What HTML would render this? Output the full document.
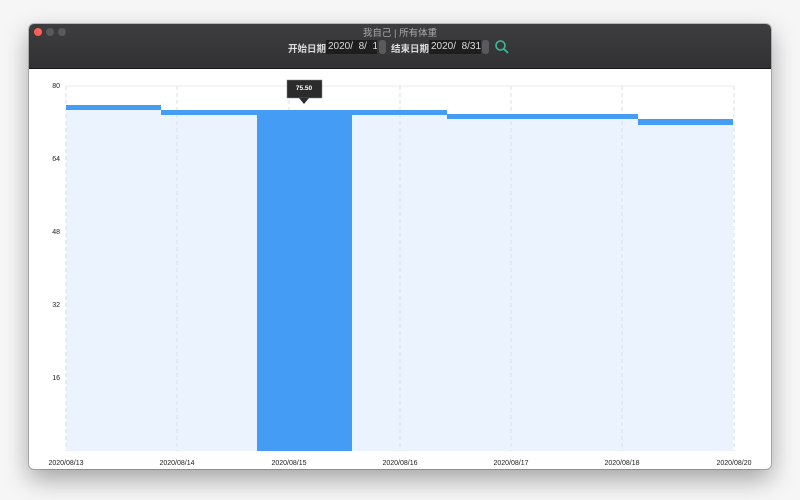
<!DOCTYPE html>
<html><head><meta charset="utf-8"><style>
body{margin:0;width:800px;height:500px;background:#f6f6f6;overflow:hidden;font-family:"Liberation Sans","Noto Sans CJK SC",sans-serif;position:relative}
.win{position:absolute;left:29px;top:24px;width:742px;height:445px;background:#fff;border-radius:5px;overflow:hidden;box-shadow:0 10px 25px rgba(0,0,0,.35),0 0 0 1px rgba(0,0,0,.2)}
.bar{position:absolute;left:0;top:0;width:742px;height:44px;background:linear-gradient(#3d3d3f,#323234);border-bottom:1px solid #1a1a1a}
.dot{position:absolute;top:4px;width:8px;height:8px;border-radius:50%;background:#5a5a5c}
.title{position:absolute;top:1px;width:742px;text-align:center;color:#a8a8a8;font-size:9.5px}
.ctl{position:absolute;top:17px;font-size:9.5px;color:#ddd;font-weight:bold}
.fld{position:absolute;top:16px;height:14px;background:#1e1e1e;color:#ddd;font-family:"Liberation Sans",sans-serif;font-size:10px;line-height:14px!important;padding-left:2px;white-space:nowrap;overflow:hidden}
.fld span{display:block;height:14px;line-height:14px}
.stp{position:absolute;top:16px;width:7px;height:14px;background:#5a5a5a;border-radius:3px}
</style></head><body>
<div class="win">
<div class="bar">
<div class="dot" style="left:5px;background:#fe5f57"></div>
<div class="dot" style="left:17px"></div>
<div class="dot" style="left:29px"></div>
<div class="title">我自己 | 所有体重</div>
<div class="ctl" style="left:259px">开始日期</div>
<div class="fld" style="left:297px;width:49px"><span>2020/&nbsp; 8/&nbsp; 1</span></div>
<div class="stp" style="left:350px"></div>
<div class="ctl" style="left:362px">结束日期</div>
<div class="fld" style="left:400px;width:50px"><span>2020/&nbsp; 8/31</span></div>
<div class="stp" style="left:453px"></div>
<svg style="position:absolute;left:465px;top:15px" width="16" height="16"><circle cx="6.5" cy="6.5" r="4.5" fill="none" stroke="#3cb89a" stroke-width="1.6"/><line x1="10" y1="10" x2="14" y2="14" stroke="#3cb89a" stroke-width="1.8"/></svg>
</div>
</div>
<svg style="position:absolute;left:0;top:0" width="800" height="500" font-family="Liberation Sans, sans-serif" font-size="7">
<g stroke="#e8e8ec" stroke-width="1">
<line x1="66" y1="86" x2="734" y2="86"/><line x1="66" y1="159" x2="734" y2="159"/><line x1="66" y1="232" x2="734" y2="232"/><line x1="66" y1="305" x2="734" y2="305"/><line x1="66" y1="378" x2="734" y2="378"/>
</g>
<g fill="#ebf3fe">
<rect x="66" y="105" width="95" height="346"/><rect x="161" y="110" width="96" height="341"/><rect x="352" y="110" width="95" height="341"/><rect x="447" y="114" width="95" height="337"/><rect x="542" y="114" width="96" height="337"/><rect x="638" y="119" width="95" height="332"/>
</g>
<g stroke="#dcdde2" stroke-dasharray="4,3">
<line x1="66" y1="86" x2="66" y2="451"/><line x1="177" y1="86" x2="177" y2="451"/><line x1="289" y1="86" x2="289" y2="451"/><line x1="400" y1="86" x2="400" y2="451"/><line x1="511" y1="86" x2="511" y2="451"/><line x1="622" y1="86" x2="622" y2="451"/><line x1="734" y1="86" x2="734" y2="451"/>
</g>
<g fill="#459cf5">
<rect x="66" y="105" width="95" height="5"/><rect x="161" y="110" width="96" height="5"/><rect x="257" y="110" width="95" height="341"/><rect x="352" y="110" width="95" height="5"/><rect x="447" y="114" width="95" height="5"/><rect x="542" y="114" width="96" height="5"/><rect x="638" y="119" width="95" height="6"/>
</g>
<g fill="#222" text-anchor="end"><text x="60" y="88">80</text><text x="60" y="161">64</text><text x="60" y="234">48</text><text x="60" y="307">32</text><text x="60" y="380">16</text></g>
<g fill="#222" text-anchor="middle"><text x="66" y="465">2020/08/13</text><text x="177" y="465">2020/08/14</text><text x="289" y="465">2020/08/15</text><text x="400" y="465">2020/08/16</text><text x="511" y="465">2020/08/17</text><text x="622" y="465">2020/08/18</text><text x="734" y="465">2020/08/20</text></g>
<rect x="287" y="80" width="35" height="18" fill="#2b2b2b" stroke="#888" stroke-width=".5"/>
<polygon points="299,98 309,98 304,104" fill="#2b2b2b"/>
<text x="304" y="90" fill="#fff" font-size="6.5" font-weight="bold" text-anchor="middle">75.50</text>
</svg>
</body></html>
